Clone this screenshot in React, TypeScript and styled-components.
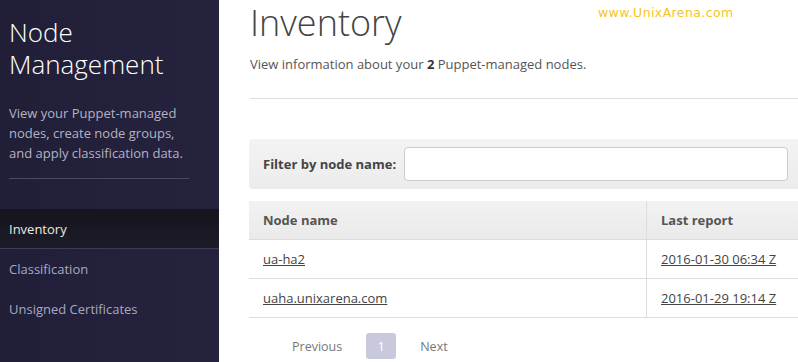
import React from "react";
import styled, { createGlobalStyle } from "styled-components";

const GlobalStyle = createGlobalStyle`
  html, body {
    margin: 0;
    padding: 0;
    background: #ffffff;
  }
  body {
    font-family: "Open Sans", "Noto Sans", sans-serif;
    font-size: 13px;
  }
`;

const Page = styled.div`
  display: flex;
  width: 798px;
  height: 362px;
  overflow: hidden;
  position: relative;
`;

const Sidebar = styled.aside`
  width: 219px;
  flex-shrink: 0;
  background: linear-gradient(90deg, #211f38 0%, #24223d 100%);
  display: flex;
  flex-direction: column;
`;

const SideHeader = styled.div`
  padding: 16px 30px 0 9px;
`;

const SideTitle = styled.h1`
  margin: 0;
  font-size: 26px;
  font-weight: 300;
  line-height: 32px;
  color: #ffffff;
`;

const SideText = styled.p`
  margin: 23px 0 0;
  font-size: 13px;
  line-height: 20px;
  color: #b4b3c4;
`;

const SideRule = styled.hr`
  margin: 15px 0 0;
  border: 0;
  border-top: 1px solid #4a4862;
`;

const Nav = styled.nav`
  margin-top: 30px;
  display: flex;
  flex-direction: column;
`;

const NavItem = styled.a<{ $active?: boolean }>`
  display: flex;
  align-items: center;
  height: ${({ $active }) => ($active ? "39px" : "40px")};
  padding-left: 9px;
  font-size: 13px;
  color: ${({ $active }) => ($active ? "#ecebe0" : "#a9a8c2")};
  background: ${({ $active }) =>
    $active ? "linear-gradient(180deg, #16151d 0%, #1c1b28 100%)" : "transparent"};
  border-bottom: ${({ $active }) => ($active ? "1px solid #3d3b55" : "0")};
  text-decoration: none;
`;

const Main = styled.main`
  flex: 1;
  padding: 1px 0 0 31px;
  overflow: hidden;
`;

const Heading = styled.h2`
  margin: 0;
  font-size: 36px;
  font-weight: 300;
  line-height: 44px;
  color: #444444;
`;

const Lead = styled.p`
  margin: 9px 0 0;
  font-size: 13px;
  line-height: 20px;
  color: #555555;

  strong {
    color: #333333;
  }
`;

const Rule = styled.hr`
  margin: 24px 0 0;
  border: 0;
  border-top: 1px solid #dddddd;
`;

const FilterBar = styled.div`
  margin: 40px 0 0 -1px;
  height: 50px;
  display: flex;
  align-items: center;
  gap: 8px;
  padding: 0 10px 0 14px;
  background: linear-gradient(180deg, #f3f3f3 0%, #ececec 100%);
  border-radius: 4px 0 0 4px;
`;

const FilterLabel = styled.label`
  font-size: 13px;
  font-weight: 700;
  color: #444444;
  white-space: nowrap;
`;

const FilterInput = styled.input`
  flex: 1;
  height: 34px;
  box-sizing: border-box;
  border: 1px solid #cccccc;
  border-radius: 4px;
  background: #ffffff;
  font-family: inherit;
`;

const Table = styled.table`
  margin: 12px 0 0 -1px;
  width: calc(100% + 1px);
  border-collapse: collapse;
  font-size: 13px;
`;

const HeadCell = styled.th<{ $first?: boolean }>`
  height: 38px;
  padding: 0 14px;
  text-align: left;
  font-weight: 700;
  color: #555555;
  background: linear-gradient(180deg, #f2f2f2 0%, #eaeaea 100%);
  border-bottom: 1px solid #dddddd;
  border-right: ${({ $first }) => ($first ? "1px solid #dddddd" : "0")};
  width: ${({ $first }) => ($first ? "369px" : "auto")};
`;

const Cell = styled.td<{ $first?: boolean }>`
  height: 38px;
  padding: 0 14px;
  border-bottom: 1px solid #dddddd;
  border-right: ${({ $first }) => ($first ? "1px solid #dddddd" : "0")};
`;

const RowLink = styled.a`
  color: #444444;
  text-decoration: underline;
`;

const Pager = styled.div`
  margin: 15px 0 0 42px;
  display: flex;
  align-items: center;
  gap: 24px;
`;

const PagerLink = styled.span`
  font-size: 12.5px;
  color: #777777;
`;

const PageBox = styled.span`
  width: 30px;
  height: 26px;
  display: flex;
  align-items: center;
  justify-content: center;
  border-radius: 3px;
  background: #c9c9de;
  color: #ffffff;
  font-size: 13px;
`;

const Watermark = styled.div`
  position: absolute;
  left: 598px;
  top: 5px;
  font-family: "DejaVu Sans", sans-serif;
  font-size: 12.5px;
  letter-spacing: 0.4px;
  color: #f6c41f;
`;

const nodes = [
  { name: "ua-ha2", report: "2016-01-30 06:34 Z" },
  { name: "uaha.unixarena.com", report: "2016-01-29 19:14 Z" },
];

export default function App() {
  return (
    <>
      <GlobalStyle />
      <Page>
        <Sidebar>
          <SideHeader>
            <SideTitle>
              Node
              <br />
              Management
            </SideTitle>
            <SideText>
              View your Puppet-managed nodes, create node groups, and apply
              classification data.
            </SideText>
            <SideRule />
          </SideHeader>
          <Nav>
            <NavItem $active>Inventory</NavItem>
            <NavItem>Classification</NavItem>
            <NavItem>Unsigned Certificates</NavItem>
          </Nav>
        </Sidebar>
        <Main>
          <Heading>Inventory</Heading>
          <Lead>
            View information about your <strong>2</strong> Puppet-managed nodes.
          </Lead>
          <Rule />
          <FilterBar>
            <FilterLabel>Filter by node name:</FilterLabel>
            <FilterInput type="text" />
          </FilterBar>
          <Table>
            <thead>
              <tr>
                <HeadCell $first>Node name</HeadCell>
                <HeadCell>Last report</HeadCell>
              </tr>
            </thead>
            <tbody>
              {nodes.map((n) => (
                <tr key={n.name}>
                  <Cell $first>
                    <RowLink>{n.name}</RowLink>
                  </Cell>
                  <Cell>
                    <RowLink>{n.report}</RowLink>
                  </Cell>
                </tr>
              ))}
            </tbody>
          </Table>
          <Pager>
            <PagerLink>Previous</PagerLink>
            <PageBox>1</PageBox>
            <PagerLink>Next</PagerLink>
          </Pager>
        </Main>
        <Watermark>www.UnixArena.com</Watermark>
      </Page>
    </>
  );
}
